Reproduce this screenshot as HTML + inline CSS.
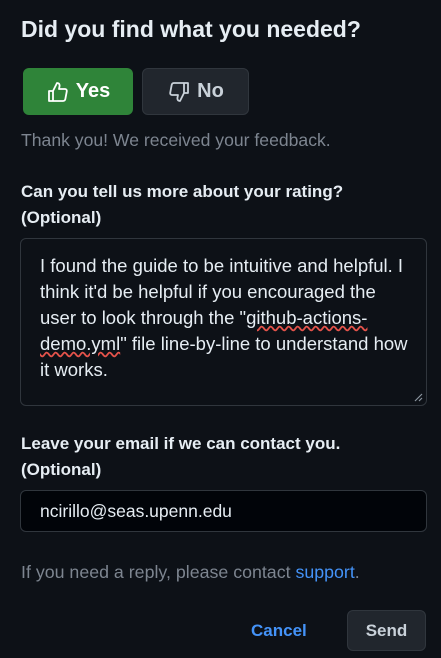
<!DOCTYPE html>
<html><head><style>
body{margin:0;background:#0d1117;width:441px;height:658px;overflow:hidden;font-family:"Liberation Sans",sans-serif;color:#e6edf3;position:relative}
.a{position:absolute;white-space:nowrap}
h1{position:absolute;left:21px;top:16px;margin:0;font-size:23px;font-weight:bold;white-space:nowrap}
.btn{position:absolute;border-radius:6px;box-sizing:border-box;font-weight:bold;font-size:20px;display:flex;align-items:center;justify-content:center;gap:6px}
.lab{font-weight:bold;font-size:17px;line-height:26px}
.box{position:absolute;left:20px;width:407px;box-sizing:border-box;border:1px solid #30363d;border-radius:6px}
.w{text-decoration:underline wavy #e5534b}
</style></head><body>
<h1>Did you find what you needed?</h1>
<div class="btn" style="left:23px;top:68px;width:110px;height:47px;background:#2f8439;color:#fff">
<svg width="24" height="24" viewBox="0 0 24 24" fill="none" stroke="#fff" stroke-width="1.8" stroke-linejoin="round"><path d="M3 11h4v10H3zM7 11l4-8c2 0 3 1.5 2.5 3.5L13 9h6c1.2 0 2 1 1.8 2.2l-1.5 8C19 20.3 18.2 21 17 21H7"/></svg>Yes</div>
<div class="btn" style="left:142px;top:68px;width:107px;height:47px;background:#21262d;border:1px solid #30363d;color:#c9d1d9">
<svg width="24" height="24" viewBox="0 0 24 24" fill="none" stroke="#c9d1d9" stroke-width="1.8" stroke-linejoin="round"><path d="M21 13h-4V3h4zM17 13l-4 8c-2 0-3-1.5-2.5-3.5L11 15H5c-1.2 0-2-1-1.8-2.2l1.5-8C5 3.7 5.8 3 7 3h10"/></svg>No</div>
<div class="a" style="left:21px;top:130px;font-size:17.6px;color:#7d8590">Thank you! We received your feedback.</div>
<div class="a lab" style="left:21px;top:179px">Can you tell us more about your rating?<br>(Optional)</div>
<div class="box" style="top:238px;height:168px;padding:14px 0 0 19px;font-size:18.5px;line-height:26px;white-space:nowrap;overflow:hidden">I found the guide to be intuitive and helpful. I<br>think it'd be helpful if you encouraged the<br>user to look through the "<span class="w">github-actions-</span><br><span class="w">demo.yml</span>" file line-by-line to understand how<br>it works.
<svg style="position:absolute;right:3px;bottom:3px" width="9" height="9"><path d="M1 8L8 1M5 8L8 5" stroke="#8b949e" stroke-width="1.2"/></svg></div>
<div class="a lab" style="left:21px;top:431px">Leave your email if we can contact you.<br>(Optional)</div>
<div class="box" style="top:490px;height:42px;background:#010409;padding:10px 0 0 19px;font-size:17.5px">ncirillo@seas.upenn.edu</div>
<div class="a" style="left:21px;top:562px;font-size:17.8px;color:#7d8590">If you need a reply, please contact <span style="color:#4493f8">support</span>.</div>
<div class="a" style="left:251px;top:621px;font-size:17px;font-weight:bold;color:#4493f8">Cancel</div>
<div class="btn" style="left:347px;top:610px;width:79px;height:41px;background:#21262d;border:1px solid #30363d;color:#c9d1d9;font-size:17px">Send</div>
</body></html>
